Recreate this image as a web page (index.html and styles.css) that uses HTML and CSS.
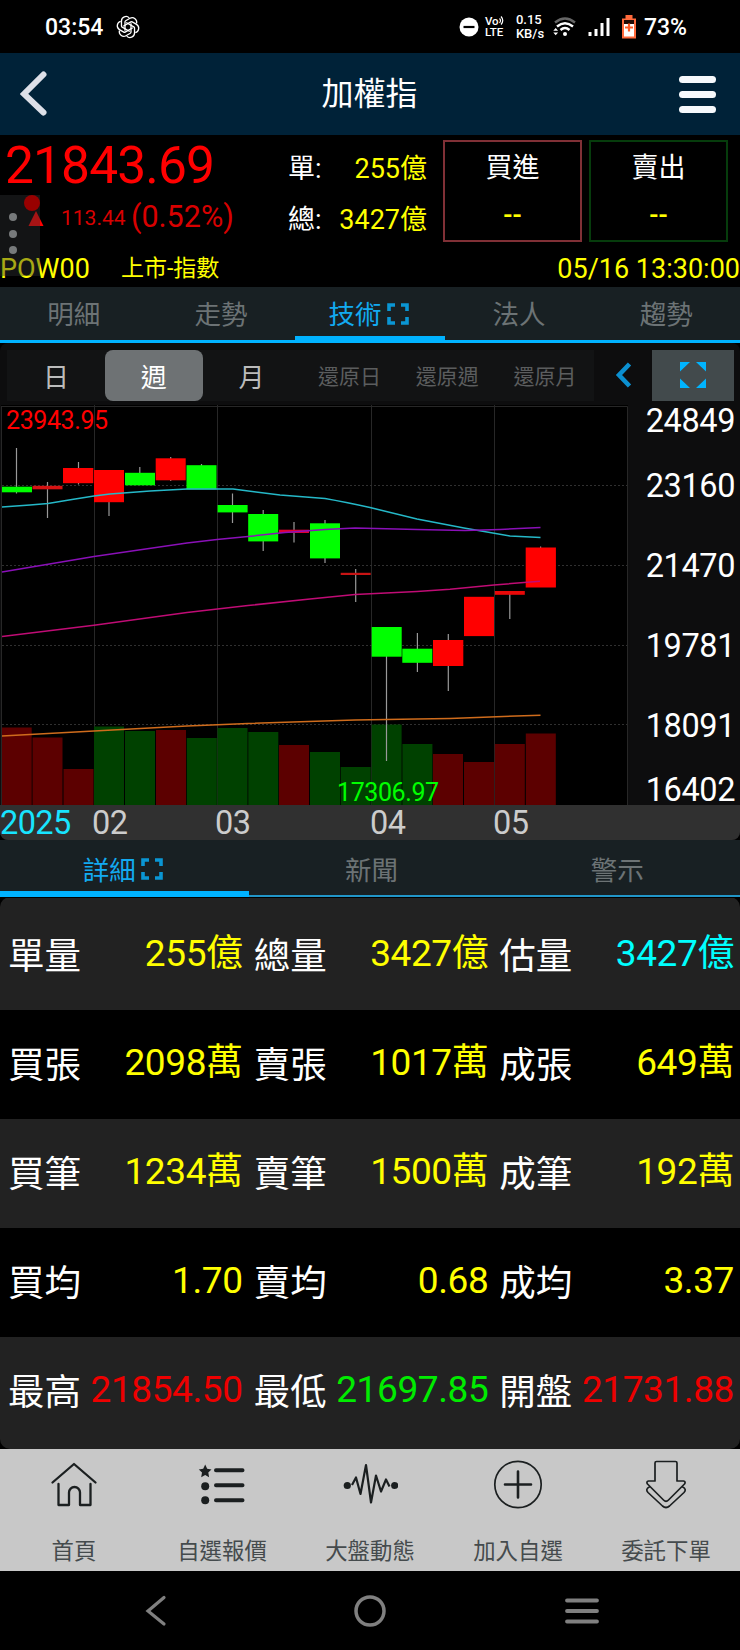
FILE: index.html
```html
<!DOCTYPE html>
<html lang="zh-Hant">
<head>
  <meta charset="UTF-8">
  <title>加權指</title>
  <link rel="stylesheet" href="styles.css">
</head>
<body>
  <div class="status-bar">
    <span class="clock">03:54</span>
    <svg class="knot" width="24" height="24" viewBox="0 0 24 24">
      <g fill="none" stroke="#fff" stroke-width="1.3" stroke-linejoin="round">
        <path id="petal" d="M9 15.8 V7 a1.5 1.5 0 0 1 .7-1.2 L14 3.300 a4.500 4.500 0 0 1 6.500 5.200"/>
        <use href="#petal" transform="rotate(60 12 12)"/>
        <use href="#petal" transform="rotate(120 12 12)"/>
        <use href="#petal" transform="rotate(180 12 12)"/>
        <use href="#petal" transform="rotate(240 12 12)"/>
        <use href="#petal" transform="rotate(300 12 12)"/>
      </g>
    </svg>
    <div class="status-right">
      <svg class="dnd" width="20" height="20" viewBox="0 0 20 20"><circle cx="10" cy="10" r="9.500" fill="#fff"/><path d="M4.500 10h11" stroke="#000" stroke-width="2.200"/></svg>
      <div class="volte"><span>Vo<svg width="6" height="9" viewBox="0 0 6 9"><path d="M.5 2.500q2 2 0 4.500M2 .5q3.500 4 0 8" fill="none" stroke="#fff" stroke-width="1.200"/></svg></span><span>LTE</span></div>
      <div class="speed"><span>0.15</span><span>KB/s</span></div>
      <svg class="wifi" width="24" height="20" viewBox="0 0 24 20">
        <path d="M2 5.500Q12-2.500 22 5.500" fill="none" stroke="#666" stroke-width="2.400"/>
        <path d="M4 9.500Q12 3 20 9.500M7.500 13Q12 9 16.500 13" fill="none" stroke="#fff" stroke-width="2.400"/>
        <circle cx="12" cy="17" r="2" fill="#fff"/>
        <path d="M.3 13.800h4.800L2.700 11zM.3 15.500h4.800L2.700 18.300z" fill="#fff"/>
      </svg>
      <svg class="signal" width="22" height="20" viewBox="0 0 22 20"><path d="M.5 15h3v4h-3zM6.500 12h3v7h-3zM12.500 6h3v13h-3zM18.500 1h3v18h-3z" fill="#fff"/></svg>
      <svg class="battery" width="16" height="26" viewBox="0 0 16 26">
        <path d="M4.500 1h7v3.500h3.500V24.500H1V4.500h3.500z" fill="#ff6a3c"/>
        <path d="M3 6h10v4H3z" fill="#210a04"/><path d="M3 10h10v12.500H3z" fill="#fff"/>
        <path d="M8 9.500v8M4 13.500h8" stroke="#ff5a26" stroke-width="2.200"/>
      </svg>
      <span class="percent">73%</span>
    </div>
  </div>

  <header class="header">
    <svg width="28" height="46" viewBox="0 0 28 46"><path d="M23.500 3.500L4 23 23.500 41.500" fill="none" stroke="#dde0e8" stroke-width="6" stroke-linecap="round"/></svg>
    <h1>加權指</h1>
    <div class="menu-btn"><i></i><i></i><i></i></div>
  </header>

  <section class="quote">
    <div class="quote-top">
      <div class="price-block">
        <div class="price">21843.69</div>
        <div class="change">
          <svg width="16" height="15" viewBox="0 0 16 15"><path d="M8 0l7.500 15H.5z" fill="#f00"/></svg>
          <span class="diff">113.44</span><span class="pct">(0.52%)</span>
        </div>
      </div>
      <div class="totals">
        <div><span>單:</span><b>255億</b></div>
        <div><span>總:</span><b>3427億</b></div>
      </div>
      <div class="order buy"><span>買進</span><b>--</b></div>
      <div class="order sell"><span>賣出</span><b>--</b></div>
    </div>
    <div class="quote-info"><span class="code">POW00</span><span class="market">上市-指數</span><span class="time">05/16 13:30:00</span></div>
    <div class="float-handle"><i></i><i></i><i></i></div>
    <div class="float-dot"></div>
  </section>

  <nav class="tabs">
    <a>明細</a>
    <a>走勢</a>
    <a class="active">技術<svg width="22" height="22" viewBox="0 0 22 22"><path d="M2 8V2h6M14 2h6v6M20 14v6h-6M8 20H2v-6" fill="none" stroke="#0a96d4" stroke-width="3.600"/></svg></a>
    <a>法人</a>
    <a>趨勢</a>
  </nav>

  <section class="chart-panel">
    <div class="toolbar">
      <div class="periods">
        <span>日</span><span class="selected">週</span><span>月</span>
        <span class="small">還原日</span><span class="small">還原週</span><span class="small">還原月</span>
      </div>
      <svg class="prev" width="18" height="26" viewBox="0 0 18 26"><path d="M14.500 2L4 13l10.500 11" fill="none" stroke="#0b8fd0" stroke-width="4.600"/></svg>
      <div class="expand"><svg width="26" height="26" viewBox="0 0 26 26"><path d="M0 0h10L0 9.500zM16 0h10v9.500zM0 16.500L10 26H0zM26 16.500V26H16z" fill="#00b4ff"/></svg></div>
    </div>

    <div class="chart-row">
      <svg class="chart" width="629" height="400" viewBox="0 0 629 400">
        <rect x="1" width="627" height="400" fill="#000"/>
        <g fill="none" stroke="#272727" stroke-width="1">
          <path d="M1.500 1V400M1 1.500H627.500V400M94.500 0V400M217.500 0V400M371.500 0V400M494.500 0V400"/>
          <path d="M2 80.500H627M2 160.500H627M2 240.500H627M2 319.500H627" stroke="#303030" stroke-dasharray="2 2"/>
        </g>
        <!-- volume -->
        <g fill="#5c0000">
          <rect x="2" y="322.500" width="29.700" height="78"/>
          <rect x="32.500" y="332.500" width="30" height="68"/>
          <rect x="63.500" y="364" width="30" height="36"/>
          <rect x="156" y="325" width="30" height="75"/>
          <rect x="279" y="340" width="30" height="60"/>
          <rect x="433" y="349" width="30" height="51"/>
          <rect x="464" y="357" width="30" height="43"/>
          <rect x="494.800" y="339" width="30" height="61"/>
          <rect x="525.800" y="328.500" width="30" height="72"/>
        </g>
        <g fill="#004100">
          <rect x="94" y="321.500" width="30" height="79"/>
          <rect x="125" y="326" width="30" height="74"/>
          <rect x="186.800" y="333" width="30" height="67"/>
          <rect x="217.500" y="323" width="30" height="77"/>
          <rect x="248.300" y="327" width="30" height="73"/>
          <rect x="310" y="347" width="30" height="53"/>
          <rect x="340.700" y="362" width="30" height="38"/>
          <rect x="371.600" y="319.500" width="30" height="81"/>
          <rect x="402.400" y="339" width="30" height="61"/>
        </g>
        <!-- wicks -->
        <path d="M16.500 43V88.500M47.500 77V113M78.500 57V79.500M109 65V111M139.800 62V80M170.700 52V76M201.500 59V84M232.500 88.500V118M263.200 105V146M294 117V137.500M325 115V158M355.700 164V197M386.500 222V356M417.400 228V267M448.300 229V286M509.800 186V214M540.600 141.500V182" stroke="#999" stroke-width="1.200"/>
        <!-- candles -->
        <g fill="#f00">
          <rect x="32.500" y="80.800" width="30" height="3.500" fill="#d61212"/>
          <rect x="63" y="63" width="30.300" height="15.200"/>
          <rect x="94" y="65" width="30" height="32.200"/>
          <rect x="155.700" y="53.300" width="30" height="22"/>
          <rect x="279" y="124.700" width="30" height="3.300" fill="#e00030"/>
          <rect x="340.700" y="167.800" width="30" height="2.200" fill="#c81414"/>
          <rect x="433" y="235" width="30.300" height="26"/>
          <rect x="464" y="191.800" width="30" height="39.300"/>
          <rect x="494.800" y="186" width="30" height="3.800" fill="#e80808"/>
          <rect x="525.700" y="142.500" width="30.200" height="40"/>
        </g>
        <g fill="#0f0">
          <rect x="2" y="81.700" width="30" height="5.600"/>
          <rect x="125" y="67.800" width="30" height="12.500"/>
          <rect x="186.500" y="60.200" width="30" height="24.200"/>
          <rect x="217.600" y="100" width="30" height="7.400"/>
          <rect x="248.200" y="109" width="30" height="27.400"/>
          <rect x="310" y="118.300" width="30" height="35.100"/>
          <rect x="371.700" y="222" width="30" height="29.700"/>
          <rect x="402.300" y="243.700" width="30" height="14.100"/>
        </g>
        <!-- moving averages -->
        <g fill="none" stroke-width="1.500">
          <path d="M2 102L30 100 48 98.500 72 94.500 94 91 110 89 150 86 187 84H233L280 90 325 93.500Q345 97 370 102.500L417 114 464 123 510 131 540.500 132.500" stroke="#25b8c8"/>
          <path d="M2 167L94 151.500 187 138 217 134.500 248 131.500 285 127.500 325 124.500 355 123 417 124.500 465 125.500 500 124.500 540.500 122.500" stroke="#8a10b8"/>
          <path d="M2 231.500L94 220.300 187 207.500 248 200.500 310 194 355 189.500 417 186.500 450 184.300 494 180 540 176.200" stroke="#c00c75"/>
          <path d="M2 331L94 326 187 321 248 318.500 355 315 417 314 450 313.400 540.500 310.200" stroke="#cf6c1c"/>
        </g>
        <text x="6" y="24" class="high">23943.95</text>
        <text x="337" y="396" class="low">17306.97</text>
      </svg>
      <div class="price-axis">
        <span>24849</span><span>23160</span><span>21470</span><span>19781</span><span>18091</span><span>16402</span>
      </div>
    </div>

    <div class="date-axis"><span class="year">2025</span><span>02</span><span>03</span><span>04</span><span>05</span></div>
  </section>

  <nav class="tabs sub-tabs">
    <a class="active">詳細<svg width="22" height="22" viewBox="0 0 22 22"><path d="M2 8V2h6M14 2h6v6M20 14v6h-6M8 20H2v-6" fill="none" stroke="#0a96d4" stroke-width="3.600"/></svg></a>
    <a>新聞</a>
    <a>警示</a>
  </nav>

  <section class="details">
    <div class="row">
      <div><span>單量</span><b>255億</b></div>
      <div><span>總量</span><b>3427億</b></div>
      <div><span>估量</span><b class="cyan">3427億</b></div>
    </div>
    <div class="row">
      <div><span>買張</span><b>2098萬</b></div>
      <div><span>賣張</span><b>1017萬</b></div>
      <div><span>成張</span><b>649萬</b></div>
    </div>
    <div class="row">
      <div><span>買筆</span><b>1234萬</b></div>
      <div><span>賣筆</span><b>1500萬</b></div>
      <div><span>成筆</span><b>192萬</b></div>
    </div>
    <div class="row">
      <div><span>買均</span><b>1.70</b></div>
      <div><span>賣均</span><b>0.68</b></div>
      <div><span>成均</span><b>3.37</b></div>
    </div>
    <div class="row">
      <div><span>最高</span><b class="red">21854.50</b></div>
      <div><span>最低</span><b class="green">21697.85</b></div>
      <div><span>開盤</span><b class="red">21731.88</b></div>
    </div>
  </section>

  <nav class="bottom-nav">
    <a>
      <svg width="50" height="50" viewBox="0 0 50 50"><path d="M3.500 22.500L25 4l21.500 18.500M9.500 24v21H20V32.500a5.500 5.500 0 0 1 11 0V45h10.500V24" fill="none" stroke="#1b1f20" stroke-width="2.300" stroke-linecap="round" stroke-linejoin="round"/></svg>
      <span>首頁</span>
    </a>
    <a>
      <svg width="50" height="50" viewBox="0 0 50 50"><path d="M8.200 4.500l2 4.300 4.300.6-3.200 3.200.8 4.700-3.900-2.300-4 2.300.8-4.700L1.800 9.400l4.400-.6z" fill="#1b1f20"/><circle cx="8.200" cy="26.200" r="4" fill="#1b1f20"/><circle cx="8.200" cy="40.300" r="4" fill="#1b1f20"/><path d="M19 10.300h26.500M19 25.300h26.500M19 40.300h26.500" stroke="#1b1f20" stroke-width="4" stroke-linecap="round"/></svg>
      <span>自選報價</span>
    </a>
    <a>
      <svg width="56" height="50" viewBox="0 0 56 50"><circle cx="5.300" cy="25.500" r="3.600" fill="#1b1f20"/><circle cx="52.700" cy="25.500" r="3.600" fill="#1b1f20"/><path d="M10 25l4-7.500 4.500 16.500L24 5l5 37.500 5-27 5 16 5-12 3.500 7" fill="none" stroke="#1b1f20" stroke-width="2.200" stroke-linejoin="round"/></svg>
      <span>大盤動態</span>
    </a>
    <a>
      <svg width="50" height="50" viewBox="0 0 50 50"><circle cx="25" cy="24.500" r="23.200" fill="none" stroke="#1b1f20" stroke-width="1.700"/><path d="M12 24.500h26M25 11.500v26" stroke="#1b1f20" stroke-width="2.600" stroke-linecap="round"/></svg>
      <span>加入自選</span>
    </a>
    <a>
      <svg width="50" height="50" viewBox="0 0 50 50"><path d="M14 21V3q0-1.500 1.500-1.500h19Q36 1.500 36 3v18h6.500q2.500.5 1 3L27.500 40q-2.500 2.500-5 0L6.500 24q-1.500-2.500 1-3zM8.500 27q-4.500 2-1.500 5.500L21.500 46q3.500 3 7 0L43 32.500q3-3.500-1.500-5.500" fill="none" stroke="#1b1f20" stroke-width="1.700" stroke-linejoin="round"/></svg>
      <span>委託下單</span>
    </a>
  </nav>

  <div class="system-nav">
    <svg width="22" height="32" viewBox="0 0 22 32"><path d="M19 2.500L3 16l16 13" fill="none" stroke="#808080" stroke-width="3.200" stroke-linecap="round"/></svg>
    <svg class="home" width="34" height="34" viewBox="0 0 34 34"><circle cx="17" cy="17" r="14" fill="none" stroke="#808080" stroke-width="3.500"/></svg>
    <svg width="34" height="28" viewBox="0 0 34 28"><path d="M2 3.500h30M2 14h30M2 24.500h30" stroke="#808080" stroke-width="3.800" stroke-linecap="round"/></svg>
  </div>
</body>
</html>
```

FILE: styles.css
```css
* {
  margin: 0;
  padding: 0;
  box-sizing: border-box;
}

body {
  width: 740px;
  height: 1650px;
  background: #000;
  color: #fff;
  font-family: Roboto, 'Noto Sans CJK TC', sans-serif;
  font-weight: 400;
  overflow: hidden;
}

svg {
  display: block;
  flex: none;
}

b, i {
  font-weight: inherit;
  font-style: normal;
}

/* Status bar */
.status-bar {
  height: 53px;
  padding: 0 53px 0 45px;
  display: flex;
  align-items: center;
  font-weight: 500;
}

.clock {
  font-size: 23px;
  padding-top: 1px;
}

.knot {
  margin-left: 13px;
}

.status-right {
  margin-left: auto;
  display: flex;
  align-items: center;
}

.volte, .speed {
  display: flex;
  flex-direction: column;
  font-size: 13px;
  line-height: 14px;
}

.volte {
  margin-left: 6px;
  width: 20px;
  line-height: 11px;
  font-size: 11.5px;
}

.volte span {
  display: flex;
}

.speed {
  margin-left: 11px;
  width: 29px;
}

.wifi {
  margin-left: 8px;
}

.signal {
  margin-left: 11px;
}

.battery {
  margin-left: 11px;
}

.percent {
  margin-left: 7px;
  padding-top: 1px;
  font-size: 23px;
}

/* Header */
.header {
  height: 82px;
  padding: 0 24px 0 20px;
  background: #002238;
  display: flex;
  align-items: center;
  justify-content: space-between;
}

.header h1 {
  font-size: 32px;
  font-weight: 400;
  line-height: 40px;
  margin-left: 12px;
}

.menu-btn {
  width: 37px;
  display: flex;
  flex-direction: column;
  gap: 8px;
}

.menu-btn i {
  height: 7px;
  border-radius: 4px;
  background: #f6f9fc;
}

/* Quote */
.quote {
  height: 152px;
  position: relative;
}

.quote-top {
  height: 108px;
  padding-top: 5px;
  display: flex;
}

.price-block {
  width: 288px;
  padding-left: 5px;
}

.price {
  height: 52px;
  font-size: 51.5px;
  line-height: 52px;
  letter-spacing: -0.9px;
  color: #f00;
}

.change {
  height: 48px;
  padding-left: 23px;
  display: flex;
  align-items: center;
  color: #d80000;
}

.change svg {
  margin-top: 5px;
}

.diff {
  margin-left: 17px;
  padding-top: 4px;
  width: 70px;
  font-size: 21px;
}

.pct {
  font-size: 30.5px;
}

.totals {
  width: 139px;
  padding: 1px 0 0 0;
}

.totals div {
  height: 51px;
  display: flex;
  justify-content: space-between;
  align-items: center;
  font-size: 27px;
}

.totals b, .order b, .quote-info {
  color: #ff0;
}

.order {
  width: 139px;
  height: 102px;
  padding-top: 3px;
  margin-left: 16px;
  border: 2px solid #803036;
  display: flex;
  flex-direction: column;
  align-items: center;
  font-size: 27px;
  line-height: 47px;
}

.order b {
  font-weight: 500;
}

.order.sell {
  margin-left: 7px;
  border-color: #063c0c;
}

.quote-info {
  height: 44px;
  padding-top: 8px;
  display: flex;
  align-items: center;
  line-height: 32px;
  font-size: 27px;
}

.market {
  margin-left: 31px;
  font-size: 23px;
}

.time {
  margin-left: auto;
}

.float-handle {
  position: absolute;
  left: 0;
  top: 60px;
  width: 40px;
  height: 81px;
  padding: 18px 0 0 9px;
  background: rgba(45, 48, 49, 0.42);
  display: flex;
  flex-direction: column;
  gap: 8.5px;
}

.float-handle i {
  width: 8px;
  height: 8px;
  border-radius: 50%;
  background: #777a7b;
}

.float-dot {
  position: absolute;
  left: 24px;
  top: 60px;
  width: 16px;
  height: 16px;
  border-radius: 50%;
  background: #980000;
}

/* Tabs */
.tabs {
  height: 56px;
  display: flex;
  background: #182023;
  border-bottom: 3px solid #00b2ff;
}

.tabs a {
  flex: 1;
  height: 56px;
  padding-top: 7px;
  padding-bottom: 7px;
  display: flex;
  align-items: center;
  justify-content: center;
  gap: 5px;
  font-size: 26.5px;
  line-height: 36px;
  color: #6c7375;
}

.tabs .active {
  padding-right: 3px;
  padding-bottom: 0;
  color: #12aaf0;
  border-bottom: 7px solid #00b2ff;
}

.tabs.sub-tabs {
  height: 57px;
  border-bottom: 2px solid #2196c8;
}

.sub-tabs a {
  height: 57px;
  padding-top: 11px;
}

.sub-tabs .active {
  padding-bottom: 1px;
  border-bottom-width: 6px;
}

.tabs svg {
  margin-top: -3px;
}

/* Chart */
.chart-panel {
  height: 497px;
  padding-top: 2px;
  background: #0d0d0e;
  border-radius: 8px;
  overflow: hidden;
}

.toolbar {
  height: 60px;
  padding-left: 7px;
  display: flex;
  align-items: center;
}

.periods {
  width: 587px;
  height: 51px;
  background: #121314;
  display: flex;
}

.periods span {
  flex: 1;
  display: flex;
  align-items: center;
  justify-content: center;
  font-size: 26px;
  color: #bbb;
}

.periods .small {
  font-size: 21px;
  color: #5b5d5e;
}

.periods .selected {
  background: #6e7274;
  color: #fff;
  border-radius: 8px;
}

.prev {
  margin-left: 21px;
}

.expand {
  margin-left: 19px;
  width: 82px;
  height: 51px;
  background: #424a4c;
  display: flex;
  align-items: center;
  justify-content: center;
}

.chart-row {
  height: 400px;
  display: flex;
}

.chart text {
  font-size: 25px;
  letter-spacing: -0.4px;
}

.high {
  fill: #f00;
}

.low {
  fill: #0f0;
}

.price-axis {
  flex: 1;
  padding: 1px 5px 0 0;
  display: grid;
  grid-template-rows: 40px 80px 80px 80px 80px 39px;
  justify-items: end;
  align-items: center;
  font-size: 32.5px;
  line-height: 30px;
  letter-spacing: -0.4px;
}

.price-axis span:first-child {
  align-self: start;
}

.price-axis span:last-child {
  align-self: end;
}

.date-axis {
  height: 35px;
  background: #303030;
  color: #ccc;
  font-size: 32.5px;
  line-height: 36px;
  letter-spacing: -0.6px;
  display: grid;
  grid-template-columns: 92px 123px 155px 123px 1fr;
}

.year {
  color: #18e4ff;
}

/* Details */
.details {
  height: 552px;
  padding-top: 1px;
  border-radius: 10px;
  overflow: hidden;
}

.row {
  height: 109px;
  padding: 3px 3px 0 0;
  display: grid;
  grid-template-columns: repeat(3, 1fr);
}

.row:first-child {
  height: 112px;
  padding-top: 6px;
}

.row:last-child {
  height: 112px;
  padding-top: 0;
}

.row:nth-child(odd) {
  background: #222;
}

.row div {
  padding: 0 3px 0 8px;
  display: flex;
  align-items: center;
  justify-content: space-between;
  font-size: 36.5px;
  line-height: 44px;
}

.row b {
  margin-top: -6px;
  font-size: 37px;
  letter-spacing: -0.4px;
  color: #ff0;
}

.row b.cyan {
  color: #0ff;
}

.row b.red {
  color: #ee0000;
}

.row b.green {
  color: #00ec00;
}

/* Bottom navigation */
.bottom-nav {
  height: 122px;
  background: #c8c8c8;
  display: flex;
}

.bottom-nav a {
  flex: 1;
  padding-top: 11px;
  display: flex;
  flex-direction: column;
  align-items: center;
  font-size: 22.4px;
  line-height: 30px;
  color: #454b4d;
}

.bottom-nav span {
  margin-top: 26px;
}

.system-nav {
  height: 79px;
  padding: 0 141px 0 145px;
  display: flex;
  align-items: center;
  justify-content: space-between;
}

.home {
  margin-left: 8px;
}
```
